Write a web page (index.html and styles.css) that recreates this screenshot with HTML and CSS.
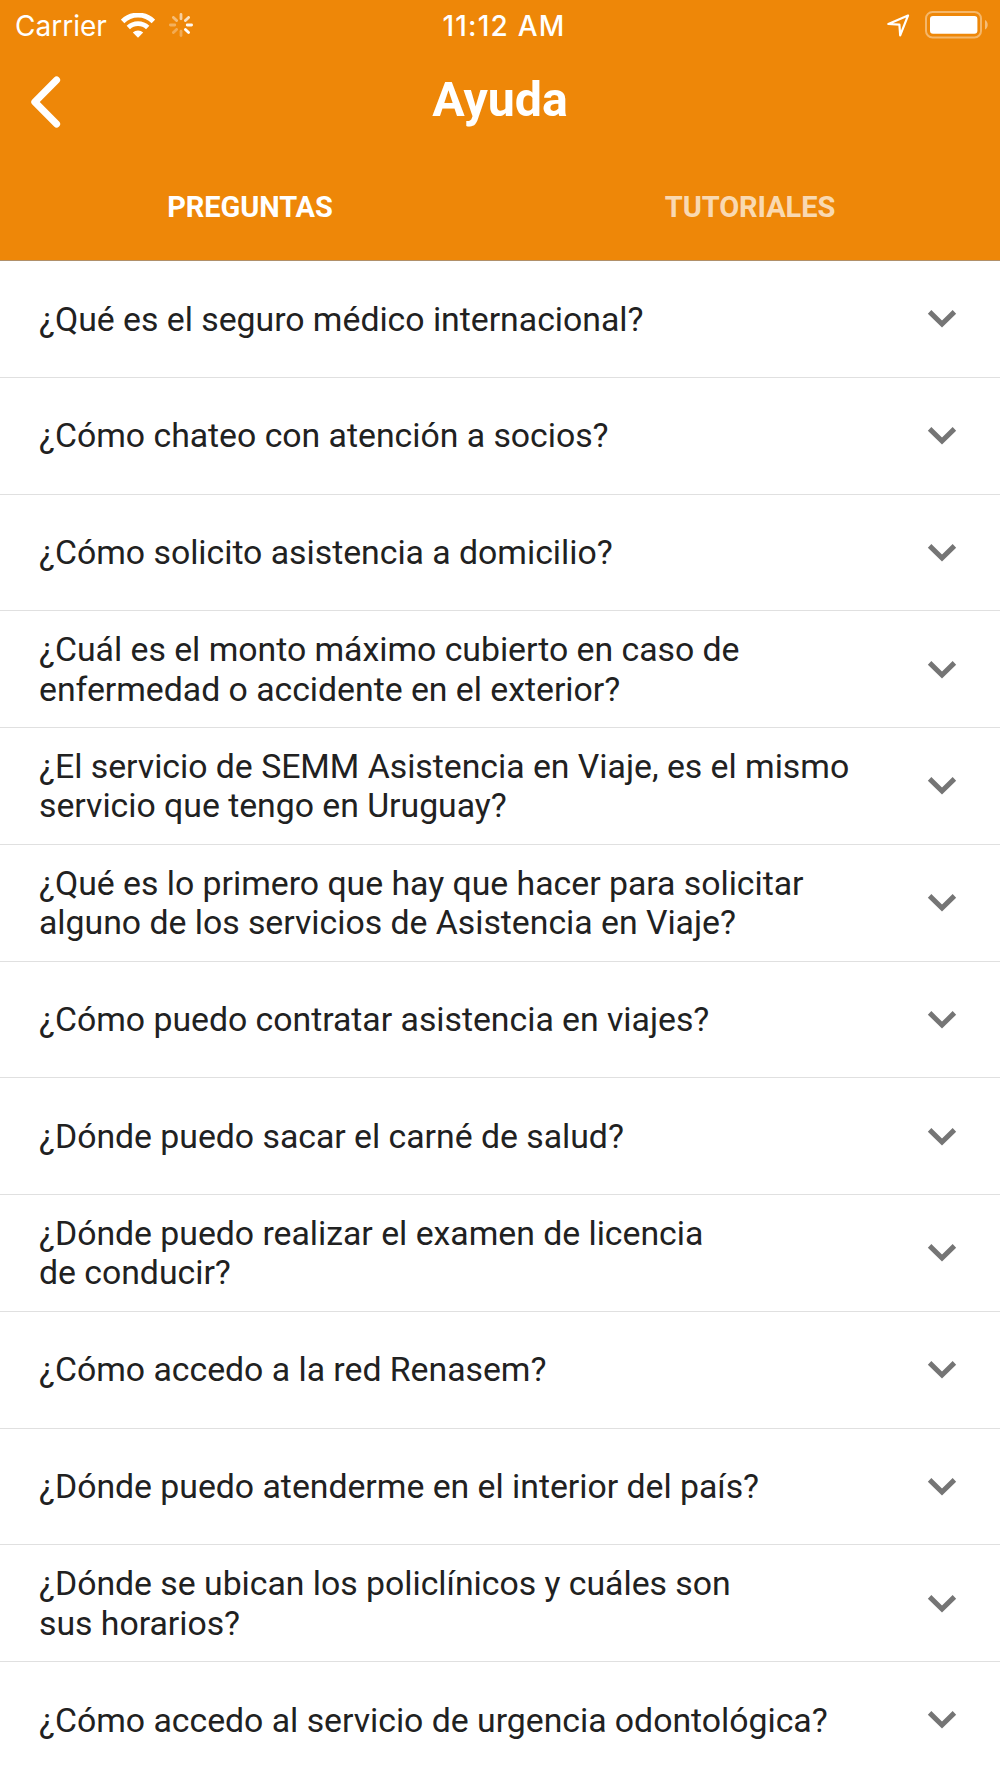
FILE: index.html
```html
<!DOCTYPE html>
<html lang="es">
<head>
  <meta charset="utf-8">
  <title>Ayuda</title>
  <link rel="stylesheet" href="styles.css">
</head>
<body>
  <header class="header">
    <div class="status-bar">
      <div class="status-left">
        <span class="carrier">Carrier</span>
        <svg class="wifi" width="34" height="25" viewBox="0 0 34 25">
          <path d="M1.6 8.4 A22 22 0 0 1 32.4 8.4" fill="none" stroke="#fff" stroke-width="5"/>
          <path d="M7.3 14.6 A14 14 0 0 1 26.7 14.6" fill="none" stroke="#fff" stroke-width="4.8"/>
          <path d="M17 24.7 L11.8 19.6 A7.2 7.2 0 0 1 22.2 19.6 Z" fill="#fff"/>
        </svg>
        <svg class="spinner" width="24" height="24" viewBox="-12 -12 24 24" stroke="#fff" stroke-width="2.8" stroke-linecap="round">
          <path d="M0 -6.2 V-10.6" opacity=".6"/>
          <path d="M4.4 -4.4 L7.6 -7.6" opacity=".75"/>
          <path d="M6.2 0 H10.6" opacity=".95"/>
          <path d="M4.4 4.4 L7.6 7.6"/>
          <path d="M0 6.2 V10.6" opacity=".3"/>
          <path d="M-4.4 4.4 L-7.6 7.6" opacity=".3"/>
          <path d="M-6.2 0 H-10.6" opacity=".35"/>
          <path d="M-4.4 -4.4 L-7.6 -7.6" opacity=".45"/>
        </svg>
      </div>
      <div class="clock">11:12 AM</div>
      <div class="status-right">
        <svg class="location" width="23" height="23" viewBox="0 0 23 23">
          <path d="M21 1.6 L1.4 10 L12.4 10.6 L13.2 21.4 Z" fill="none" stroke="#fff" stroke-width="2.2" stroke-linejoin="round"/>
        </svg>
        <svg class="battery" width="64" height="28" viewBox="0 0 64 28">
          <rect x="1" y="1" width="55" height="25.4" rx="6.5" fill="none" stroke="#fff" stroke-width="2" opacity=".4"/>
          <rect x="5" y="5" width="47.4" height="17.8" rx="3" fill="#fff"/>
          <path d="M60 9 C63.6 10.5 63.6 17 60 18.5 Z" fill="#fff" opacity=".45"/>
        </svg>
      </div>
    </div>

    <div class="nav-bar">
      <svg class="back" width="31" height="52" viewBox="0 0 31 52">
        <path d="M26.6 4 L4.8 26 L26.6 48" fill="none" stroke="#fff" stroke-width="7" stroke-linecap="round" stroke-linejoin="round"/>
      </svg>
      <h1 class="title">Ayuda</h1>
    </div>

    <div class="tabs">
      <div class="tab active">PREGUNTAS</div>
      <div class="tab">TUTORIALES</div>
    </div>
  </header>

  <ul class="questions" id="questions">
    <li class="question"><span>¿Qué es el seguro médico internacional?</span></li>
    <li class="question"><span>¿Cómo chateo con atención a socios?</span></li>
    <li class="question"><span>¿Cómo solicito asistencia a domicilio?</span></li>
    <li class="question"><span>¿Cuál es el monto máximo cubierto en caso de<br>enfermedad o accidente en el exterior?</span></li>
    <li class="question"><span>¿El servicio de SEMM Asistencia en Viaje, es el mismo<br>servicio que tengo en Uruguay?</span></li>
    <li class="question"><span>¿Qué es lo primero que hay que hacer para solicitar<br>alguno de los servicios de Asistencia en Viaje?</span></li>
    <li class="question"><span>¿Cómo puedo contratar asistencia en viajes?</span></li>
    <li class="question"><span>¿Dónde puedo sacar el carné de salud?</span></li>
    <li class="question"><span>¿Dónde puedo realizar el examen de licencia<br>de conducir?</span></li>
    <li class="question"><span>¿Cómo accedo a la red Renasem?</span></li>
    <li class="question"><span>¿Dónde puedo atenderme en el interior del país?</span></li>
    <li class="question"><span>¿Dónde se ubican los policlínicos y cuáles son<br>sus horarios?</span></li>
    <li class="question"><span>¿Cómo accedo al servicio de urgencia odontológica?</span></li>
  </ul>

  <script>
    // same chevron on every row
    document.querySelectorAll('.question').forEach(row => {
      row.insertAdjacentHTML('beforeend',
        '<svg class="chevron" width="30" height="20" viewBox="0 0 30 20">' +
        '<path d="M2.6 2.9 L15 15.1 L27.4 2.9" fill="none" stroke="#757575" stroke-width="5"/></svg>');
    });
  </script>
</body>
</html>
```
FILE: styles.css
```css
* {
  box-sizing: border-box;
}
body {
  margin: 0;
  width: 1000px;
  height: 1778px;
  overflow: hidden;
  background-color: #fff;
  color: #212121;
  font-family: Roboto, sans-serif;
}
.header {
  height: 261px;
  background-color: #ee8708;
  border-bottom: 1px solid #b0906a;
  color: #fff;
}
.status-bar {
  display: grid;
  grid-template-columns: 1fr auto 1fr;
  align-items: center;
  height: 50px;
  padding: 0 11px 0 15px;
  font-family: Inter, sans-serif;
  font-size: 28px;
}
.status-left, .status-right {
  display: flex;
  align-items: center;
}
.status-right {
  justify-content: flex-end;
  gap: 15px;
}
.carrier {
  padding-top: 1px;
}
.wifi {
  margin-left: 14px;
}
.spinner {
  margin-left: 14px;
}
.clock {
  padding: 1px 0 0 4px;
  font-weight: 500;
  letter-spacing: 1.2px;
}
.nav-bar {
  display: grid;
  grid-template-columns: 31px 1fr 31px;
  align-items: center;
  height: 104px;
  padding: 0 30px;
}
.title {
  margin: 0;
  padding-bottom: 6px;
  font-size: 48.3px;
  font-weight: 700;
  text-align: center;
}
.tabs {
  display: flex;
  height: 106px;
}
.tab {
  flex: 1;
  display: flex;
  justify-content: center;
  align-items: center;
  font-size: 29px;
  font-weight: 700;
  letter-spacing: -0.1px;
  color: rgba(255, 255, 255, 0.7);
}
.tab.active {
  color: #fff;
}
.questions {
  margin: 0;
  padding: 0;
  list-style: none;
}
.question {
  display: flex;
  justify-content: space-between;
  align-items: center;
  height: 116.75px;
  padding: 1px 43px 0 39px;
  border-bottom: 1px solid #e0e0e0;
  font-size: 33.8px;
  line-height: 39.5px;
  letter-spacing: -0.02px;
  white-space: nowrap;
}
```
